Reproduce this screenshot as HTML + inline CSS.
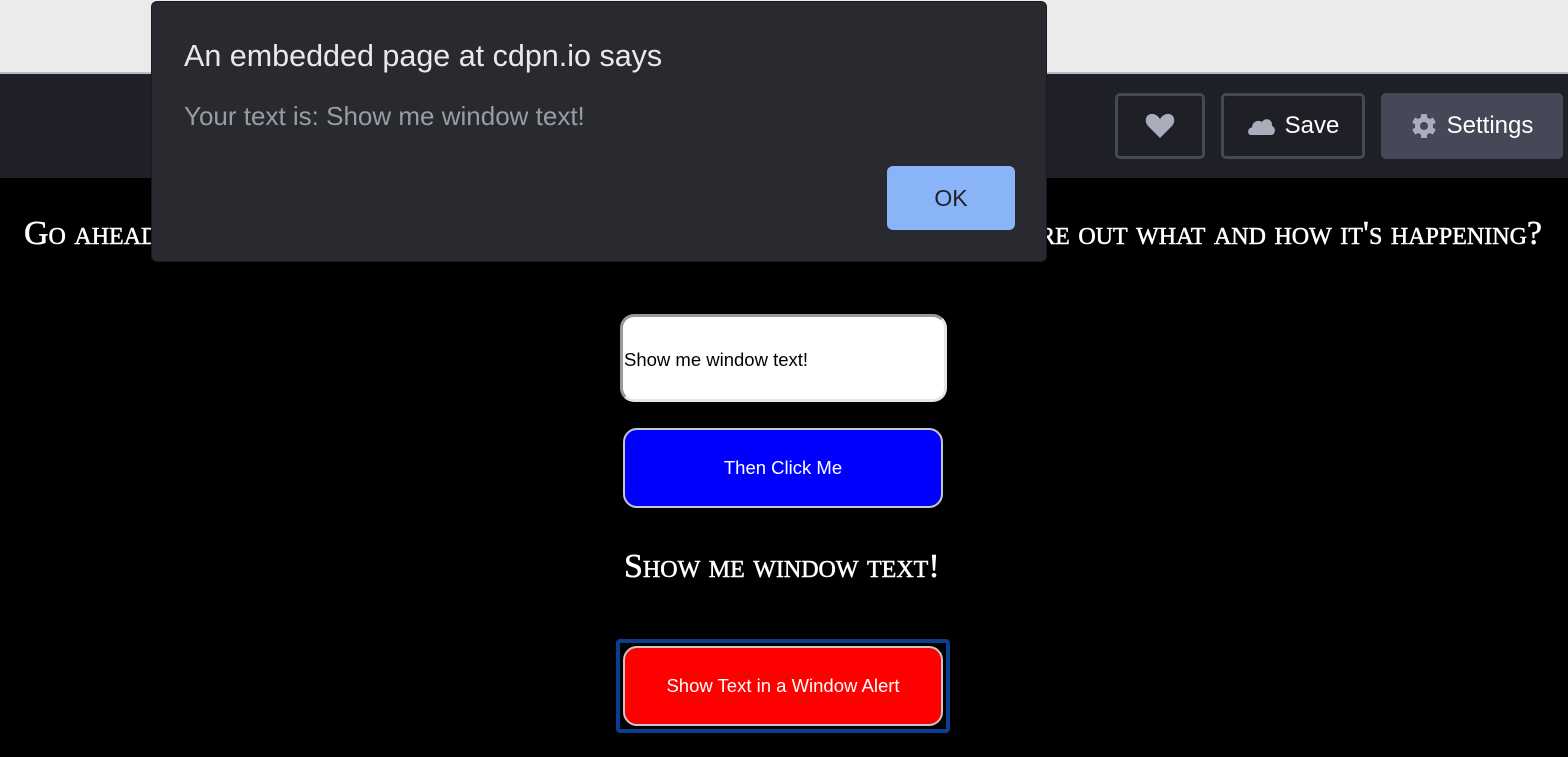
<!DOCTYPE html>
<html><head><style>
*{margin:0;padding:0;box-sizing:border-box}
body{width:1568px;height:757px;overflow:hidden;background:#000;position:relative;font-family:"Liberation Sans",sans-serif}
.top{position:absolute;left:0;top:0;width:1568px;height:72px;background:#ebebeb}
.line{position:absolute;left:0;top:72px;width:1568px;height:2px;background:#b8bcbc}
.hdr{position:absolute;left:0;top:74px;width:1568px;height:104px;background:#1f2027}
.btn{position:absolute;top:93px;height:66px;border:3px solid #444857;border-radius:5px;color:#fff;font-size:24px;display:flex;align-items:center;justify-content:center;gap:10px}
.h{position:absolute;top:215px;color:#fff;font-family:"Liberation Serif",serif;font-variant:small-caps;font-size:34px;white-space:nowrap;-webkit-text-stroke:0.5px #fff}
.dlg{position:absolute;left:151px;top:1px;width:896px;height:261px;background:#292a2f;border-radius:6px;border:1px solid #1a1a1d}
</style></head><body>
<div class="top"></div><div class="line"></div><div class="hdr"></div>
<div class="btn" style="left:1115px;width:90px"><svg width="30" height="26" viewBox="0 0 30 26"><path d="M15 25 L3 13 C-2 7 2 0 8 1 C11 1.5 13 3 15 6 C17 3 19 1.5 22 1 C28 0 32 7 27 13 Z" fill="#aaaebc"/></svg></div>
<div class="btn" style="left:1221px;width:144px"><svg width="28" height="20" viewBox="0 0 28 20"><path d="M4 19 C0 19 0 12 5 11.5 C5 6 11 3 15 6 C18 1 26 3 25 10 C29 11 29 19 24 19 Z" fill="#aaaebc"/></svg>Save</div>
<div class="btn" style="left:1381px;width:182px;background:#444857;border-color:#444857"><svg width="26" height="26" viewBox="0 0 26 26"><g fill="#aaaebc"><circle cx="13" cy="13" r="9"/><rect x="10" y="1" width="6" height="24" rx="1"/><rect x="10" y="1" width="6" height="24" rx="1" transform="rotate(60 13 13)"/><rect x="10" y="1" width="6" height="24" rx="1" transform="rotate(120 13 13)"/></g><circle cx="13" cy="13" r="4" fill="#444857"/></svg>Settings</div>
<div class="h" style="left:24px">Go ahead, type something</div>
<div class="h" style="right:26px">figure out what and how it's happening?</div>
<div class="dlg">
<div style="position:absolute;left:32px;top:37px;color:#e8e9ec;font-size:30.5px">An embedded page at cdpn.io says</div>
<div style="position:absolute;left:32px;top:99px;color:#9a9ca3;font-size:26px">Your text is: Show me window text!</div>
<div style="position:absolute;left:735px;top:164px;width:128px;height:64px;background:#8ab4f8;border-radius:6px;color:#202124;font-size:23px;display:flex;align-items:center;justify-content:center">OK</div>
</div>
<div style="position:absolute;left:620px;top:314px;width:327px;height:88px;background:#fff;border:3px solid;border-color:#999 #e5e5e5 #e5e5e5 #999;border-radius:14px;font-size:18.5px;color:#000;display:flex;align-items:center;padding-left:1px;padding-top:4px">Show me window text!</div>
<div style="position:absolute;left:623px;top:428px;width:320px;height:80px;background:#0000ff;border:2px solid #c8c8c8;border-radius:14px;color:#fff;font-size:18.5px;display:flex;align-items:center;justify-content:center">Then Click Me</div>
<div style="position:absolute;left:624px;top:548px;color:#fff;font-family:'Liberation Serif',serif;font-variant:small-caps;font-size:34px;white-space:nowrap;-webkit-text-stroke:0.5px #fff">Show me window text!</div>
<div style="position:absolute;left:616px;top:639px;width:334px;height:94px;border:4px solid #0a3e8f;border-radius:4px"></div>
<div style="position:absolute;left:623px;top:646px;width:320px;height:80px;background:#ff0000;border:2px solid #c8c8c8;border-radius:14px;color:#fff;font-size:18.5px;display:flex;align-items:center;justify-content:center">Show Text in a Window Alert</div>
</body></html>
